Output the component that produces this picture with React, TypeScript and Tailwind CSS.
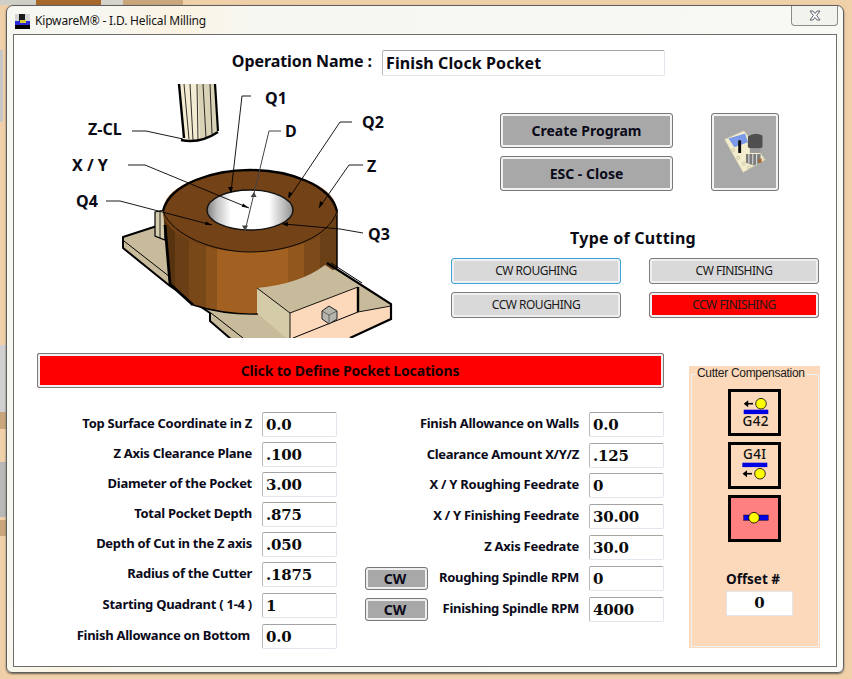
import React from "react";

const TAHOMA = "font-['Noto_Sans','Liberation_Sans',sans-serif]";

function Input({ value }: { value: string }) {
  return (
    <div className="box-border h-[25px] w-[75px] shrink-0 rounded-[2px] border border-[#e2e6ec] border-l-[#b9b9b9] border-t-[#a3a3a3] bg-white pl-[3px] font-['DejaVu_Serif',serif] text-[15px] font-bold leading-[24px] tracking-[-0.2px] text-[#0b0b0b]">
      {value}
    </div>
  );
}

function Label({ children, shift }: { children: React.ReactNode; shift?: boolean }) {
  return (
    <span className={`whitespace-nowrap pb-[3px] text-[13px] font-bold leading-[16px] tracking-[-0.27px] text-[#0a0a1a] ${shift ? "mr-[2px]" : ""}`}>
      {children}
    </span>
  );
}

function GreyButton({ children }: { children: React.ReactNode }) {
  return (
    <div className="box-border flex h-[35px] w-[173px] items-center justify-center rounded-[3px] border border-[#787878] bg-[#a8a8a8] pb-[1px] text-[14px] font-bold text-[#0a0a1a] shadow-[inset_0_0_0_2px_#f2f2f2]">
      {children}
    </div>
  );
}

function CutButton({ label, red, focus }: { label: string; red?: boolean; focus?: boolean }) {
  return (
    <div
      className={`box-border flex h-[26px] w-[170px] items-center justify-center rounded-[3px] border pb-[1px] text-[12px] tracking-[-0.5px] text-[#1a1a1a] shadow-[inset_0_0_0_2px_#f0f0f0] ${
        focus ? "border-[#3aa6dc]" : "border-[#7c7c7c]"
      } ${red ? "bg-[#ff0000]" : "bg-[#d9d9d9]"}`}
    >
      {label}
    </div>
  );
}

function CwButton() {
  return (
    <div className="box-border flex h-[23px] w-[63px] shrink-0 items-center justify-center rounded-[3px] border border-[#787878] bg-[#a8a8a8] pr-[3px] text-[14px] font-bold text-[#0a0a1a] shadow-[inset_0_0_0_2px_#efefef]">
      CW
    </div>
  );
}

function Arrow({ y, x1, x2 }: { y: number; x1: number; x2: number }) {
  return (
    <g>
      <line x1={x1 + 3} x2={x2} y1={y} y2={y} stroke="#000" strokeWidth="1.6" />
      <path d={`M${x1} ${y}l4.5 -3.5v7z`} fill="#000" />
    </g>
  );
}

function G42Icon() {
  return (
    <svg viewBox="3 3 47 41" className="block h-full w-full">
      <Arrow y={14.7} x1={15.7} x2={25} />
      <circle cx="33" cy="14.7" r="5.3" fill="#ffff00" stroke="#000" strokeWidth="0.8" />
      <rect x="15.7" y="20.7" width="24.6" height="4.4" fill="#0000e0" />
      <text x="27.7" y="37" textAnchor="middle" fontSize="13.5" fontWeight="500" fontFamily="Noto Sans, sans-serif" letterSpacing="0.4" fill="#111">G42</text>
    </svg>
  );
}

function G41Icon() {
  return (
    <svg viewBox="3 3 47 41" className="block h-full w-full">
      <text x="26.7" y="17" textAnchor="middle" fontSize="13.5" fontWeight="500" fontFamily="Noto Sans, sans-serif" letterSpacing="0.4" fill="#111">G4I</text>
      <rect x="14.3" y="20.7" width="25" height="4.4" fill="#0000e0" />
      <Arrow y={31.7} x1={14.5} x2={24} />
      <circle cx="32" cy="31.7" r="5.3" fill="#ffff00" stroke="#000" strokeWidth="0.8" />
    </svg>
  );
}

function G40Icon() {
  return (
    <svg viewBox="3 3 47 41" className="block h-full w-full">
      <rect x="15.7" y="20" width="24.6" height="5.3" fill="#0000e0" stroke="#000" strokeWidth="0.4" />
      <circle cx="26" cy="22.7" r="5.3" fill="#ffff00" stroke="#000" strokeWidth="0.8" />
    </svg>
  );
}

function ToolIcon() {
  return (
    <svg viewBox="711 113 68 78" className="block h-full w-full">
      <path d="M724 139L744 130L766 160L743 173Z" fill="#f4edcd" stroke="#c9c2a4" strokeWidth="0.6" />
      <path d="M728 138L745 133L748 142L734 147Z" fill="#7c98e8" />
      <rect x="738" y="140" width="3" height="13" fill="#0d0d0d" />
      <g fill="none" stroke="#b9b39a" strokeWidth="0.6">
        <circle cx="738" cy="158" r="1.6" /><circle cx="744" cy="164" r="1.6" /><circle cx="749" cy="168" r="1.6" />
        <circle cx="733" cy="150" r="1.6" /><circle cx="763" cy="160" r="1.6" />
      </g>
      <path d="M748 136Q755 131 763 135V147Q755 152 748 147Z" fill="#4f4f4f" />
      <path d="M750 148H761V153H750Z" fill="#9a9a9a" />
      <path d="M746 154H761V163L754 166L746 163Z" fill="#7d7d7d" />
      <path d="M749 154V164M753 154V165M757 154V165" stroke="#e6e6e6" strokeWidth="1" />
      <rect x="759" y="159" width="3" height="4" fill="#a9642a" />
    </svg>
  );
}

function Illustration() {
  const labelFont = "Noto Sans, Liberation Sans, sans-serif";
  const lab = (x: number, y: number, t: string) => (
    <text x={x} y={y} fontFamily={labelFont} fontWeight="700" fontSize="16" fill="#0a0a14">{t}</text>
  );
  const bands: [number, string][] = [
    [0, "#57340f"], [0.07, "#6a3f15"], [0.15, "#784818"], [0.25, "#8a531c"], [0.31, "#a26120"],
    [0.72, "#91571d"], [0.81, "#7d4b1a"], [0.9, "#6a4116"], [1, "#5e3a13"],
  ];
  return (
    <svg viewBox="70 84 330 254" className="ml-[56px] block h-[254px] w-[330px] shrink-0">
      <defs>
        <linearGradient id="side" x1="163" x2="337" y1="0" y2="0" gradientUnits="userSpaceOnUse">
          {bands.map(([o, c], i) => (
            <React.Fragment key={o}>
              <stop offset={o} stopColor={c} />
              <stop offset={i + 1 < bands.length ? bands[i + 1][0] : 1} stopColor={c} />
            </React.Fragment>
          ))}
        </linearGradient>
        <linearGradient id="hole" x1="207" x2="293" y1="0" y2="0" gradientUnits="userSpaceOnUse">
          <stop offset="0" stopColor="#7f7f7f" />
          <stop offset="0.12" stopColor="#c4c4c4" />
          <stop offset="0.28" stopColor="#ffffff" />
          <stop offset="0.72" stopColor="#ffffff" />
          <stop offset="0.9" stopColor="#b9b9b9" />
          <stop offset="1" stopColor="#8f8f8f" />
        </linearGradient>
      </defs>

      {/* base plate, left and front */}
      <path d="M123 237L157 226L260 300L290 340H232L210 321V313L170 286L123 248Z" fill="#c8bb9c" stroke="#000" strokeWidth="2" strokeLinejoin="round" />
      <path d="M124 241L170 277" stroke="#000" strokeWidth="1" />
      <path d="M211 313L243 338" stroke="#000" strokeWidth="1" />
      <path d="M155 212L165 210V240L155 236Z" fill="#d6cdae" stroke="#000" strokeWidth="1.2" />
      <path d="M160 211V238" stroke="#000" strokeWidth="0.8" />

      {/* plate on the right */}
      <path d="M327 263L391 304V319L350 338H258V290Z" fill="#c8bb9c" />
      <path d="M391 306V319L351 338H293L358 312Z" fill="#fdd9bb" />

      {/* ring */}
      <path d="M163 211L170 284L193 305Q225 315 258 314L337 268V211Z" fill="url(#side)" />
      <path d="M165 225L170 284L193 305" fill="none" stroke="#000" strokeWidth="2.8" />
      <path d="M193 305Q225 315 258 314" fill="none" stroke="#000" strokeWidth="1.4" />
      <path d="M337 211V268" stroke="#000" strokeWidth="1.5" />
      <ellipse cx="250" cy="211" rx="87" ry="41" fill="#734216" />
      <path d="M163 211C170 183 215 170 250 170C290 170 330 185 337 211" fill="none" stroke="#000" strokeWidth="2.4" />
      <path d="M163 211C172 236 215 252 250 252C290 252 330 236 337 211" fill="none" stroke="#000" strokeWidth="0.9" />
      <ellipse cx="250" cy="210" rx="43" ry="20" fill="url(#hole)" stroke="#111" strokeWidth="1.4" />

      {/* clamp block */}
      <path d="M257 288Q300 284 325 265L358 287L290 313Z" fill="#c8bb9c" />
      <path d="M257 288L290 313V338H286L257 313Z" fill="#d4cba9" />
      <path d="M290 313L358 287V312L293 338H290Z" fill="#fdd9bb" />
      <path d="M257 288L290 313L358 287M290 313V338" fill="none" stroke="#000" strokeWidth="0.9" />
      <path d="M358 287V312" stroke="#000" strokeWidth="2.4" />
      <path d="M358 312L293 338" stroke="#000" strokeWidth="1" />
      <path d="M327 263L391 304V319L350 338" fill="none" stroke="#000" strokeWidth="2.2" />
      <path d="M331 263L362 283" stroke="#000" strokeWidth="1" />
      <path d="M391 306L358 312" stroke="#000" strokeWidth="0.9" />
      <path d="M322 311L329 306L337 311L337 319L329 324L322 319Z" fill="#b5b5ad" stroke="#222" strokeWidth="1" />
      <path d="M322 311L329 315L337 311M329 315V324" fill="none" stroke="#333" strokeWidth="0.6" />

      {/* tool */}
      <path d="M178 84L184 139Q200 144 218 132L216 84Z" fill="#f3ecd2" />
      <path d="M198 84L200 140L217 132L216 84Z" fill="#d9d2b6" />
      <path d="M179 84L184 138" stroke="#000" strokeWidth="2.4" />
      <path d="M184 84L189 139M190 84L193 140M197 84L198 140M203 84L206 138M210 84L212 134" stroke="#000" strokeWidth="0.8" />
      <path d="M215 84L218 131" stroke="#000" strokeWidth="2.2" />
      <path d="M181 140Q200 144 218 132" fill="none" stroke="#000" strokeWidth="2.4" />

      {/* leaders */}
      <g fill="none" stroke="#000" strokeWidth="0.9">
        <path d="M132 131H146L183 139" />
        <path d="M128 165H145L249 208" />
        <path d="M251 96H242L231 192" />
        <path d="M352 122H340L289 198" />
        <path d="M363 165H349L319 208" />
        <path d="M106 201H120L212 225" />
        <path d="M363 233L340 229L284 224" />
      </g>
      <path d="M281 131H269L245 231" fill="none" stroke="#444" strokeWidth="1" />
      <g fill="#000">
        <path d="M249 208l-6 -4.5l-1.3 3.2z" />
        <path d="M231 193l-3 -6h5z" />
        <path d="M288 198l1 -6.5l3.6 2.3z" />
        <path d="M319 208l1 -7l3.6 2.3z" />
        <path d="M212 225l-6 -3.5l-1 3.5z" />
        <path d="M282 224l6 -2l-0.4 4.5z" />
      </g>
      <g fill="#444">
        <path d="M254 192l-3.4 5h6z" />
        <path d="M245 231l-3 -5.5h6z" />
      </g>

      {lab(88, 135, "Z-CL")}
      {lab(72, 171, "X / Y")}
      {lab(265, 104, "Q1")}
      {lab(285, 137, "D")}
      {lab(362, 128, "Q2")}
      {lab(367, 172, "Z")}
      {lab(76, 207, "Q4")}
      {lab(368, 240, "Q3")}
    </svg>
  );
}

const leftRows: [string, string, string][] = [
  ["Top Surface Coordinate in Z", "0.0", ""],
  ["Z Axis Clearance Plane", ".100", "mt-[5px]"],
  ["Diameter of the Pocket", "3.00", "mt-[5px]"],
  ["Total Pocket Depth", ".875", "mt-[5px]"],
  ["Depth of Cut in the Z axis", ".050", "mt-[5px]"],
  ["Radius of the Cutter", ".1875", "mt-[5px]"],
  ["Starting Quadrant ( 1-4 )", "1", "mt-[6px]"],
  ["Finish Allowance on Bottom", "0.0", "mt-[6px]"],
];

const rightRows: [string, string, string, boolean][] = [
  ["Finish Allowance on Walls", "0.0", "", false],
  ["Clearance Amount X/Y/Z", ".125", "mt-[6px]", false],
  ["X / Y Roughing Feedrate", "0", "mt-[5px]", false],
  ["X / Y Finishing Feedrate", "30.00", "mt-[6px]", false],
  ["Z Axis Feedrate", "30.0", "mt-[6px]", false],
  ["Roughing Spindle RPM", "0", "mt-[6px]", true],
  ["Finishing Spindle RPM", "4000", "mt-[6px]", true],
];

export default function App() {
  return (
    <div className={`relative h-[679px] w-[852px] overflow-hidden bg-[#efd0a8] pb-[6px] pl-[6px] pr-[8px] pt-[5px] ${TAHOMA}`}>
      {/* desktop fragments behind the window */}
      <div className="absolute left-0 top-0 h-[5px] w-[36px] bg-[#cfcfc8]" />
      <div className="absolute left-[36px] top-0 h-[5px] w-[65px] bg-[#a8682a]" />
      <div className="absolute left-[101px] top-0 h-[5px] w-[22px] bg-[#d4d4cc]" />
      <div className="absolute left-[123px] top-0 h-[5px] w-[60px] bg-[#c9a67c]" />
      <div className="absolute left-0 top-[50px] h-[72px] w-[3px] bg-[#c6c6c6]" />
      <div className="absolute left-0 top-[345px] h-[67px] w-[7px] bg-[#d0d0d0]" />
      <div className="absolute left-0 top-[412px] h-[17px] w-[7px] bg-[#c9a67c]" />
      <div className="absolute left-0 top-[462px] h-[55px] w-[7px] bg-[#b8b8b8]" />
      <div className="absolute left-0 top-[520px] h-[16px] w-[7px] bg-[#c9a67c]" />

      <div className="relative box-border flex h-[668px] w-[838px] flex-col rounded-b-[6px] rounded-t-[7px] border border-[#5f5f5f] bg-[linear-gradient(100deg,#f7f7f1_10%,#fbf3e2_18%,#f7f7f2_26%,#f9f9f5_100%)] px-[6px] pb-[5px] shadow-[0_1px_2px_#6b5f4c]">
        {/* title bar */}
        <div className="flex h-[28px] shrink-0 items-center">
          <div className="ml-[2px] mt-[2px] h-[15px] w-[15px]">
            <svg viewBox="0 0 15 15" className="block h-full w-full">
              <rect width="15" height="15" fill="#d5d5d5" />
              <rect x="4" y="0" width="6" height="8" fill="#1a1a1a" />
              <rect x="0" y="7" width="15" height="4" fill="#2a2ad8" />
              <rect x="5" y="6" width="6" height="3" fill="#d8c838" />
              <rect y="11" width="15" height="4" fill="#000" />
            </svg>
          </div>
          <span className="ml-[5px] mt-[2px] whitespace-nowrap text-[12px] tracking-[-0.18px] text-[#141414]">
            KipwareM® - I.D. Helical Milling
          </span>
          <div className="absolute right-[5px] top-0 flex h-[20px] w-[47px] items-center justify-center rounded-b-[4px] border border-t-0 border-[#8b8b8b] bg-[#f3f3ee]">
            <svg viewBox="0 0 12 11" className="h-[11px] w-[12px]">
              <path d="M1 1H4L6 3.5L8 1H11L7.7 5.5L11 10H8L6 7.5L4 10H1L4.3 5.5Z" fill="#fdfdfd" stroke="#5d6470" strokeWidth="1" />
            </svg>
          </div>
        </div>

        {/* client area */}
        <div className="box-border flex h-[633px] w-[824px] flex-col border border-[#6d6d6d] bg-white">
          {/* operation name */}
          <div className="mt-[14px] flex w-[651px] items-center justify-end gap-[10px]">
            <span className="pb-[3px] text-[16px] font-bold tracking-[-0.08px] text-[#0a0a14]">Operation Name :</span>
            <div className="box-border h-[26px] w-[283px] rounded-[2px] border border-[#e2e6ec] border-l-[#b9b9b9] border-t-[#a3a3a3] pl-[3px] text-[16px] font-bold leading-[24px] tracking-[0.1px] text-[#0a0a14]">
              Finish Clock Pocket
            </div>
          </div>

          {/* drawing + actions */}
          <div className="mt-[8px] flex">
            <Illustration />
            <div className="ml-[51px] w-[368px] pt-[29px]">
              <div className="flex">
                <div className="ml-[49px] flex flex-col gap-[8px]">
                  <GreyButton>Create Program</GreyButton>
                  <GreyButton>ESC - Close</GreyButton>
                </div>
                <div className="ml-[38px] box-border h-[78px] w-[68px] rounded-[3px] border border-[#787878] bg-[#a8a8a8] shadow-[inset_0_0_0_2px_#f2f2f2]">
                  <ToolIcon />
                </div>
              </div>
              <div className="mt-[36px] h-[22px] pr-[4px] text-center text-[16px] font-bold leading-[22px] tracking-[0.25px] text-[#0a0a14]">
                Type of Cutting
              </div>
              <div className="mt-[9px] grid grid-cols-[170px_170px] gap-x-[28px] gap-y-[8px]">
                <CutButton label="CW ROUGHING" focus />
                <CutButton label="CW FINISHING" />
                <CutButton label="CCW ROUGHING" />
                <CutButton label="CCW FINISHING" red />
              </div>
            </div>
          </div>

          {/* lower part */}
          <div className="mt-[15px] flex items-start">
            <div className="ml-[23px] w-[627px]">
              <div className="box-border flex h-[35px] w-full items-center justify-center rounded-[2px] border border-[#7a7a7a] bg-[#ff0000] pb-[1px] pr-[1px] text-[14px] font-bold tracking-[-0.15px] text-[#1a0000] shadow-[inset_0_0_0_2px_#f0f0f0]">
                Click to Define Pocket Locations
              </div>
              <div className="mt-[24px] flex">
                <div className="flex w-[300px] flex-col">
                  {leftRows.map(([l, v, m]) => (
                    <div key={l} className={`flex h-[25px] items-center justify-end gap-[10px] ${m}`}>
                      <Label shift={l.startsWith("Finish")}>{l}</Label>
                      <Input value={v} />
                    </div>
                  ))}
                </div>
                <div className="flex w-[327px] flex-col pl-[28px]">
                  {rightRows.map(([l, v, m, cw]) => (
                    <div key={l} className={`flex h-[25px] items-center justify-end gap-[10px] ${m}`}>
                      {cw ? <CwButton /> : null}
                      <span className="flex flex-1 justify-end">
                        <Label>{l}</Label>
                      </span>
                      <Input value={v} />
                    </div>
                  ))}
                </div>
              </div>
            </div>

            <div className="relative ml-[25px] mt-[13px] flex h-[282px] w-[131px] flex-col items-center bg-[#fcd9bb] pt-[23px]">
              <div className="absolute bottom-[1px] left-[2px] right-[1px] top-[8px] border border-[#eef1f2]" />
              <span className="absolute left-[7px] top-0 whitespace-nowrap bg-[#fcd9bb] px-[1px] font-['Liberation_Sans',sans-serif] text-[12px] leading-[14px] tracking-[-0.3px] text-[#202020]">
                Cutter Compensation
              </span>
              <div className="relative z-10 flex flex-col gap-[6px]">
                <div className="box-border h-[47px] w-[53px] border-[3px] border-black"><G42Icon /></div>
                <div className="box-border h-[47px] w-[53px] border-[3px] border-black"><G41Icon /></div>
                <div className="box-border h-[47px] w-[53px] border-[3px] border-black bg-[#ff8080]"><G40Icon /></div>
              </div>
              <div className="relative z-10 mr-[3px] mt-[28px] text-[13.5px] font-bold leading-[18px] text-[#0a0a14]">Offset #</div>
              <div className="relative z-10 ml-[10px] mt-[3px] box-border h-[25px] w-[67px] border border-[#e2e6ec] bg-white text-center font-['DejaVu_Serif',serif] text-[15px] font-bold leading-[23px] text-[#0b0b0b]">
                0
              </div>
            </div>
          </div>
        </div>
      </div>
    </div>
  );
}
